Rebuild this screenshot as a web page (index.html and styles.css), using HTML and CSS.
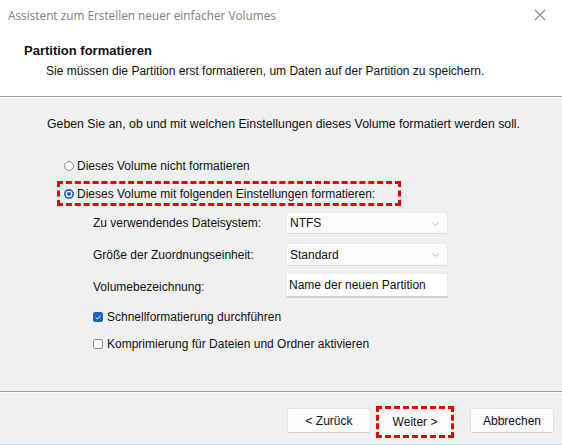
FILE: index.html
```html
<!DOCTYPE html>
<html lang="de">
<head>
<meta charset="utf-8">
<title>Assistent</title>
<link rel="stylesheet" href="styles.css">
</head>
<body>
<div class="window">
  <div class="titlebar">
    <span class="title">Assistent zum Erstellen neuer einfacher Volumes</span>
    <svg class="close" width="12" height="12" viewBox="0 0 12 12"><path d="M1 1 L11 11 M11 1 L1 11" stroke="#8a8a8a" stroke-width="1.1" fill="none"/></svg>
  </div>
  <div class="header">
    <div class="h-title">Partition formatieren</div>
    <div class="h-sub">Sie müssen die Partition erst formatieren, um Daten auf der Partition zu speichern.</div>
  </div>
  <div class="body">
    <div class="intro">Geben Sie an, ob und mit welchen Einstellungen dieses Volume formatiert werden soll.</div>
    <div class="radio-row r1"><span class="radio"></span>Dieses Volume nicht formatieren</div>
    <div class="radio-row r2 marked"><svg class="radio-on" width="10" height="10" viewBox="0 0 10 10"><circle cx="5" cy="5" r="5" fill="#1466c4"/><circle cx="5" cy="5" r="3.3" fill="#fff"/><circle cx="5" cy="5" r="2" fill="#1466c4"/></svg>Dieses Volume mit folgenden Einstellungen formatieren:</div>
    <div class="form">
      <div class="frow f1"><span class="label">Zu verwendendes Dateisystem:</span><div class="combo"><span>NTFS</span><svg class="chev" width="7" height="4" viewBox="0 0 7 4"><path d="M0.5 0.5 L3.5 3.5 L6.5 0.5" stroke="#b5b5b5" fill="none"/></svg></div></div>
      <div class="frow f2"><span class="label">Größe der Zuordnungseinheit:</span><div class="combo"><span>Standard</span><svg class="chev" width="7" height="4" viewBox="0 0 7 4"><path d="M0.5 0.5 L3.5 3.5 L6.5 0.5" stroke="#b5b5b5" fill="none"/></svg></div></div>
      <div class="frow f3"><span class="label">Volumebezeichnung:</span><div class="input">Name der neuen Partition</div></div>
      <div class="check-row c1"><span class="check on"><svg width="6" height="5" viewBox="0 0 6 5"><path d="M0.7 2.6 L2.3 4 L5.3 0.8" stroke="#fff" stroke-width="0.9" fill="none"/></svg></span>Schnellformatierung durchführen</div>
      <div class="check-row c2"><span class="check"></span>Komprimierung für Dateien und Ordner aktivieren</div>
    </div>
  </div>
  <div class="footer">
    <button class="btn b-back">&lt; Zurück</button>
    <button class="btn b-next marked">Weiter &gt;</button>
    <button class="btn b-cancel">Abbrechen</button>
  </div>
</div>
</body>
</html>
```
FILE: styles.css
```css
* { box-sizing: border-box; }
html, body { margin: 0; padding: 0; }
body {
  width: 562px;
  height: 445px;
  overflow: hidden;
  font-family: "Liberation Sans", Arial, sans-serif;
  font-size: 12px;
  color: #111;
  background: #f0f0f0;
}
.window {
  width: 562px;
  height: 445px;
  display: flex;
  flex-direction: column;
  border-bottom: 1px solid #c6d3e0;
  white-space: nowrap;
}
.titlebar {
  height: 31px;
  background: #fff;
  display: flex;
  align-items: center;
  justify-content: space-between;
  padding: 0 16px 2px 8px;
}
.title {
  font-family: "Open Sans", "Noto Sans", sans-serif;
  font-size: 11.8px;
  color: #808080;
}
.close { margin-top: 1px; }
.header {
  height: 66px;
  background: #fff;
  padding: 12px 0 0 24px;
  border-bottom: 1px solid #a0a0a0;
  box-shadow: 0 1px 0 #fff;
}
.h-title {
  font-weight: bold;
  font-size: 13px;
  line-height: 16px;
}
.h-sub {
  margin: 4px 0 0 22px;
  line-height: 16px;
}
.body {
  flex: 1;
  padding: 19px 0 0 46px;
  border-bottom: 1px solid #a0a0a0;
  box-shadow: 0 1px 0 #fff;
}
.intro { line-height: 16px; font-size: 12.3px; margin-left: 1px; }
.radio-row {
  display: flex;
  align-items: center;
  line-height: 16px;
  margin-left: 18px;
}
.r1 { margin-top: 26px; }
.r2 {
  margin-top: 7px;
  margin-left: 11px;
  width: 344px;
  height: 25px;
  padding-left: 4px;
}
.marked { border: 3px dashed #ee0000; }
.radio {
  width: 10px;
  height: 10px;
  border-radius: 50%;
  border: 1px solid #8a8a8a;
  background: #fff;
  margin-right: 3px;
}
.radio-on { margin-right: 3px; flex: none; }
.form { margin-left: 47px; }
.frow {
  display: flex;
  align-items: center;
  justify-content: space-between;
  width: 355px;
}
.f1 { margin-top: 6px; height: 22px; }
.f2 { margin-top: 9px; height: 23px; }
.f3 { margin-top: 7px; height: 25px; }
.label { line-height: 16px; }
.f3 .label { margin-top: 3px; }
.combo {
  width: 162px;
  height: 100%;
  background: #fbfbfb;
  border: 1px solid #ebebeb;
  border-bottom-color: #dcdcdc;
  border-radius: 2px;
  display: flex;
  align-items: center;
  justify-content: space-between;
  padding: 0 8px 0 3px;
}
.chev { margin-top: 1px; }
.input {
  width: 162px;
  height: 100%;
  background: #fff;
  border: 1px solid #ebebeb;
  border-bottom: 2px solid #d0d0d0;
  padding: 3px 0 0 2px;
  line-height: 16px;
}
.check-row {
  display: flex;
  align-items: center;
  line-height: 16px;
}
.c1 { margin-top: 11px; }
.c2 { margin-top: 11px; }
.check {
  width: 10px;
  height: 10px;
  border: 1px solid #8a8a8a;
  border-radius: 2px;
  background: #fff;
  margin-right: 4px;
  display: flex;
  align-items: center;
  justify-content: center;
}
.check.on { background: #1466c4; border-color: #1466c4; }
.footer {
  height: 52px;
  display: flex;
  align-items: flex-start;
  padding: 14px 0 0 287px;
}
.btn {
  font-family: "Liberation Sans", Arial, sans-serif;
  font-size: 12px;
  color: #111;
  height: 25px;
  background: #fbfbfb;
  border: 1px solid #e3e3e3;
  border-bottom-color: #cfcfcf;
  border-radius: 3px;
  padding: 0;
}
.b-back { width: 84px; margin-top: 2px; }
.b-next { width: 78px; height: 32px; margin-left: 5px; border: 3px dashed #ee0000; border-radius: 0; }
.b-cancel { width: 84px; margin-left: 16px; margin-top: 2px; }
```
